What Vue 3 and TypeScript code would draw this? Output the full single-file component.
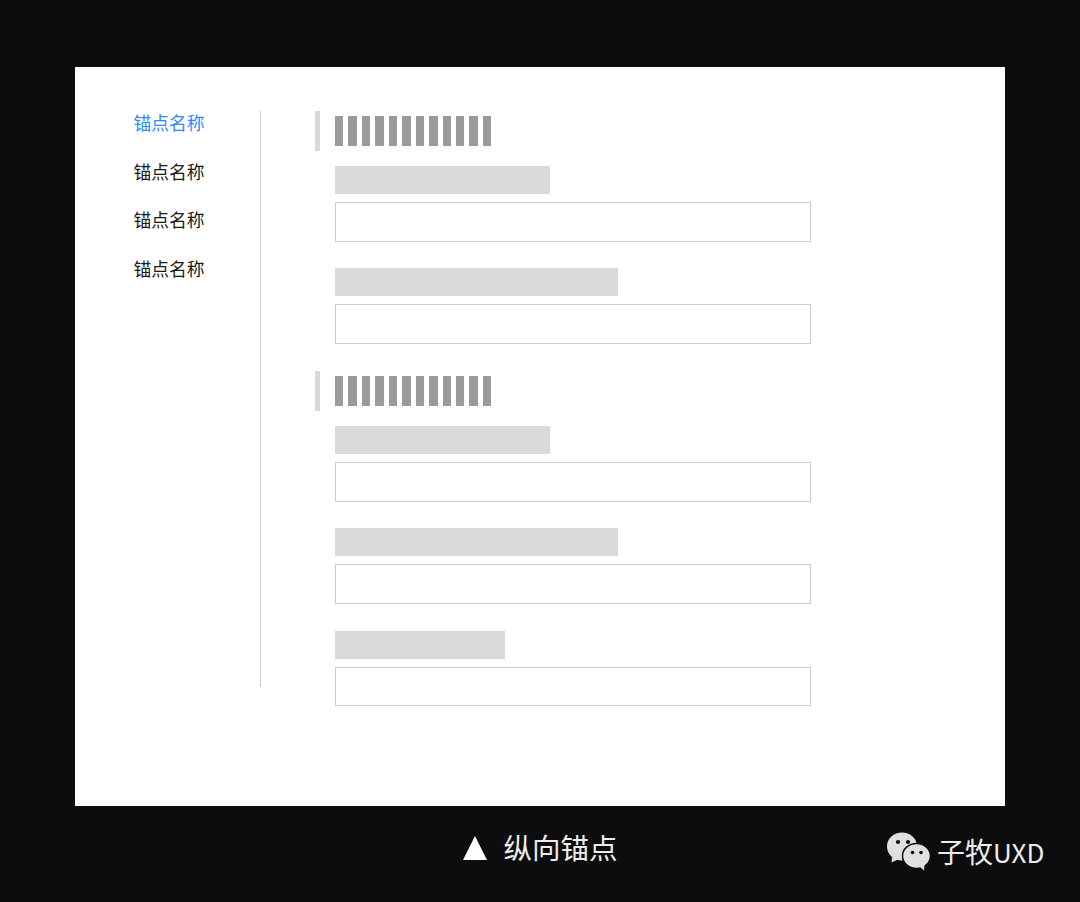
<template>
  <div class="page">
    <div class="card">
      <nav class="anchor-nav">
        <div
          v-for="(name, i) in navItems"
          :key="i"
          class="anchor-item"
          :class="{ active: i === 0 }"
        >
          {{ name }}
        </div>
      </nav>
      <div class="content">
        <section v-for="(section, s) in sections" :key="s" class="section">
          <div class="section-head">
            <span class="head-mark"></span>
            <div class="head-title">
              <i v-for="n in 12" :key="n" class="stripe"></i>
            </div>
          </div>
          <div v-for="(width, f) in section" :key="f" class="field">
            <div class="label" :style="{ width: `${width}px` }"></div>
            <div class="input"></div>
          </div>
        </section>
      </div>
    </div>
    <div class="footer">
      <div class="caption">
        <svg class="triangle" width="24" height="24" viewBox="0 0 24 24">
          <path d="M12 0 L24 24 L0 24 Z" fill="#fff" />
        </svg>
        <span class="caption-text">纵向锚点</span>
      </div>
      <div class="mark">
        <svg class="wechat" width="44" height="39" viewBox="0 0 44 39">
          <ellipse cx="15" cy="14.500" rx="15" ry="14" fill="#e0e0e0" />
          <path d="M5 25 L4.500 30.500 L11 27.500 Z" fill="#e0e0e0" />
          <ellipse cx="29.500" cy="24" rx="14" ry="12.500" fill="#e0e0e0" stroke="#0d0d0d" stroke-width="1.500" />
          <path d="M33 35 L37 38.500 L37.500 33 Z" fill="#e0e0e0" />
          <circle cx="11" cy="10" r="2.100" fill="#0d0d0d" />
          <circle cx="21" cy="10" r="2.100" fill="#0d0d0d" />
          <circle cx="25.500" cy="20.500" r="1.800" fill="#0d0d0d" />
          <circle cx="34" cy="20.500" r="1.800" fill="#0d0d0d" />
        </svg>
        <span>子牧<span class="latin">UXD</span></span>
      </div>
    </div>
  </div>
</template>

<script setup lang="ts">
const navItems: string[] = ['锚点名称', '锚点名称', '锚点名称', '锚点名称']

// label widths per section
const sections: number[][] = [
  [215, 282.5],
  [215, 282.5, 170],
]
</script>

<style scoped>
.page {
  width: 1080px;
  height: 902px;
  background: #0d0d0d;
  padding-top: 67px;
  box-sizing: border-box;
  overflow: hidden;
  font-family: "Noto Sans CJK SC", "Noto Sans", sans-serif;
}

.card {
  width: 930px;
  height: 739px;
  margin-left: 75px;
  background: #fff;
  display: flex;
  align-items: flex-start;
  padding-top: 44px;
  box-sizing: border-box;
}

.anchor-nav {
  width: 186px;
  height: 576px;
  flex: none;
  box-sizing: border-box;
  padding-left: 58.500px;
  border-right: 1px solid #c8c8c8;
}

.anchor-item {
  height: 48.600px;
  line-height: 23px;
  font-size: 17.800px;
  color: #1a1a1a;
}

.anchor-item.active {
  color: #2f88ff;
}

.content {
  margin-left: 54px;
  width: 496px;
}

.section {
  margin-bottom: 27.200px;
}

.section-head {
  display: flex;
  align-items: center;
  height: 40px;
  margin-bottom: 15px;
}

.head-mark {
  width: 5px;
  height: 40px;
  background: #d9d9d9;
  margin-right: 15px;
}

.head-title {
  display: flex;
  gap: 5px;
}

.stripe {
  display: block;
  width: 8.450px;
  height: 30px;
  background: #9b9b9b;
}

.field {
  margin-left: 20px;
  margin-bottom: 26.700px;
}

.field:last-child {
  margin-bottom: 0;
}

.label {
  height: 28px;
  background: #d9d9d9;
  margin-bottom: 8px;
}

.input {
  width: 476px;
  height: 39.600px;
  box-sizing: border-box;
  border: 1px solid #cbcbcb;
  background: #fff;
}

.footer {
  display: flex;
  align-items: flex-start;
  padding-left: 463px;
  padding-top: 23px;
  color: #ececec;
}

.caption {
  display: flex;
  align-items: center;
  height: 38px;
  font-size: 28.500px;
  line-height: 36px;
}

.caption-text {
  margin-bottom: 2px;
}

.triangle {
  margin-right: 16.500px;
}

.mark {
  display: flex;
  align-items: center;
  margin-left: 269.500px;
  margin-top: 3px;
  font-size: 28px;
  line-height: 36px;
}

.wechat {
  margin-right: 6px;
}

.latin {
  font-size: 26px;
}
</style>
